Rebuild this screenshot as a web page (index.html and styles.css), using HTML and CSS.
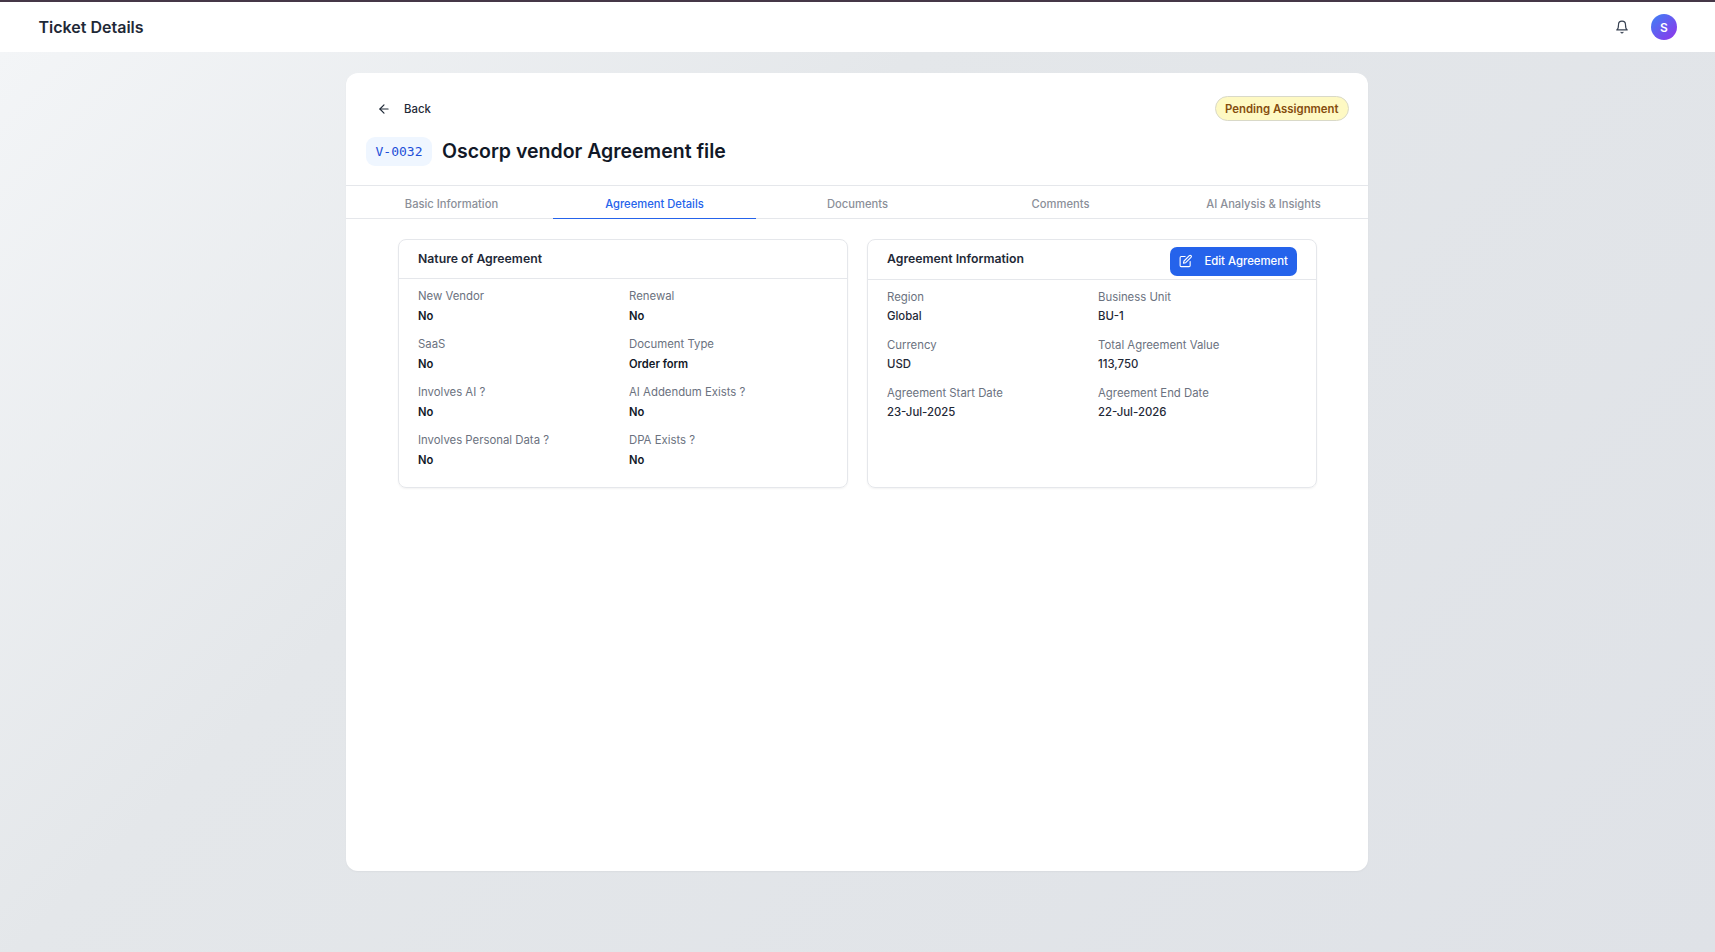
FILE: index.html
```html
<!DOCTYPE html>
<html lang="en">
<head>
    <meta charset="UTF-8" />
    <meta name="viewport" content="width=device-width, initial-scale=1.0" />
    <title>Ticket Details</title>
    <link rel="stylesheet" href="styles.css">
</head>
<body>
<header class="topbar">
    <h1 class="topbar-title">Ticket Details</h1>
    <div class="topbar-actions">
        <svg class="bell" width="14" height="14" viewBox="0 0 24 24" fill="none" stroke="currentColor" stroke-width="2" stroke-linecap="round" stroke-linejoin="round">
            <path d="M6 8a6 6 0 0 1 12 0c0 7 3 9 3 9H3s3-2 3-9" />
            <path d="M10.3 21a1.94 1.94 0 0 0 3.4 0" />
        </svg>
        <div class="avatar">S</div>
    </div>
</header>

<main class="page">
    <section class="card">
        <div class="card-head">
            <div class="back-row">
                <a class="back" href="#">
                    <svg width="14" height="14" viewBox="0 0 24 24" fill="none" stroke="currentColor" stroke-width="2" stroke-linecap="round" stroke-linejoin="round">
                        <path d="M19 12H5" />
                        <path d="M12 19l-7-7 7-7" />
                    </svg>
                    <span>Back</span>
                </a>
                <span class="status">Pending Assignment</span>
            </div>
            <div class="title-row">
                <span class="ticket-id">V-0032</span>
                <h2 class="ticket-title">Oscorp vendor Agreement file</h2>
            </div>
        </div>

        <nav class="tabs">
            <a class="tab" href="#">Basic Information</a>
            <a class="tab active" href="#">Agreement Details</a>
            <a class="tab" href="#">Documents</a>
            <a class="tab" href="#">Comments</a>
            <a class="tab" href="#">AI Analysis &amp; Insights</a>
        </nav>

        <div class="panels">
            <div class="panel">
                <div class="panel-head">
                    <h3 class="panel-title">Nature of Agreement</h3>
                </div>
                <dl class="fields">
                    <div class="field"><dt>New Vendor</dt><dd class="strong">No</dd></div>
                    <div class="field"><dt>Renewal</dt><dd class="strong">No</dd></div>
                    <div class="field"><dt>SaaS</dt><dd class="strong">No</dd></div>
                    <div class="field"><dt>Document Type</dt><dd class="strong">Order form</dd></div>
                    <div class="field"><dt>Involves AI ?</dt><dd class="strong">No</dd></div>
                    <div class="field"><dt>AI Addendum Exists ?</dt><dd class="strong">No</dd></div>
                    <div class="field"><dt>Involves Personal Data ?</dt><dd class="strong">No</dd></div>
                    <div class="field"><dt>DPA Exists ?</dt><dd class="strong">No</dd></div>
                </dl>
            </div>

            <div class="panel">
                <div class="panel-head with-button">
                    <h3 class="panel-title">Agreement Information</h3>
                    <button class="edit-btn" type="button">
                        <svg width="14" height="14" viewBox="0 0 24 24" fill="none" stroke="currentColor" stroke-width="2" stroke-linecap="round" stroke-linejoin="round">
                            <path d="M11 4H4a2 2 0 0 0-2 2v14a2 2 0 0 0 2 2h14a2 2 0 0 0 2-2v-7" />
                            <path d="M18.5 2.5a2.12 2.12 0 0 1 3 3L12 15l-4 1 1-4z" />
                        </svg>
                        <span>Edit Agreement</span>
                    </button>
                </div>
                <dl class="fields info">
                    <div class="field"><dt>Region</dt><dd>Global</dd></div>
                    <div class="field"><dt>Business Unit</dt><dd>BU-1</dd></div>
                    <div class="field"><dt>Currency</dt><dd>USD</dd></div>
                    <div class="field"><dt>Total Agreement Value</dt><dd>113,750</dd></div>
                    <div class="field"><dt>Agreement Start Date</dt><dd>23-Jul-2025</dd></div>
                    <div class="field"><dt>Agreement End Date</dt><dd>22-Jul-2026</dd></div>
                </dl>
            </div>
        </div>
    </section>
</main>
</body>
</html>
```

FILE: styles.css
```css
* {
    box-sizing: border-box;
}

html,
body {
    height: 100%;
}

body {
    margin: 0;
    display: flex;
    flex-direction: column;
    font-family: Inter, "Liberation Sans", sans-serif;
    color: #111827;
    overflow: hidden;
}

/* Top bar */
.topbar {
    height: 52px;
    flex: none;
    display: flex;
    align-items: center;
    justify-content: space-between;
    padding: 0 38px 0 38.5px;
    background: #fff;
    border-top: 2px solid #453747;
}

.topbar-title {
    margin: 0 0 1px;
    font-size: 16px;
    font-weight: 600;
    color: #1f2937;
}

.topbar-actions {
    display: flex;
    align-items: center;
    gap: 22px;
}

.bell {
    color: #374151;
}

.avatar {
    width: 26px;
    height: 26px;
    border-radius: 50%;
    display: flex;
    align-items: center;
    justify-content: center;
    font-size: 12px;
    font-weight: 600;
    color: #fff;
    background: linear-gradient(135deg, #3b82f6, #9333ea);
}

/* Page background and main card */
.page {
    flex: 1;
    padding: 21px 347px 81px 346px;
    background: linear-gradient(135deg, #f3f5f7 0%, #e4e7ea 35%, #dfe2e7 100%);
}

.card {
    height: 100%;
    background: #fff;
    border-radius: 12px;
    box-shadow: 0 1px 2px rgba(0, 0, 0, 0.04);
}

.card-head {
    height: 113px;
    padding: 23px 19px 0 20px;
    border-bottom: 1px solid #e5e7eb;
}

.back-row {
    display: flex;
    align-items: center;
    justify-content: space-between;
    height: 25px;
}

.back {
    display: flex;
    align-items: center;
    gap: 13px;
    padding-left: 11px;
    font-size: 11.375px;
    font-weight: 500;
    color: #1f2937;
    text-decoration: none;
}

.status {
    height: 25px;
    padding: 0 9.5px;
    display: flex;
    align-items: center;
    font-size: 11.375px;
    font-weight: 600;
    color: #854d0e;
    background: #fef9c3;
    border: 1px solid #d9d9c8;
    border-radius: 13px;
}

.title-row {
    display: flex;
    align-items: center;
    gap: 10px;
    margin-top: 16px;
}

.ticket-id {
    height: 29px;
    padding: 0 9.5px;
    display: flex;
    align-items: center;
    font-family: "DejaVu Sans Mono", monospace;
    font-size: 13px;
    color: #1d4ed8;
    background: #eff6ff;
    border-radius: 9px;
}

.ticket-title {
    margin: 0 0 1px;
    font-size: 19.5px;
    font-weight: 600;
    color: #111827;
}

/* Tabs */
.tabs {
    display: grid;
    grid-template-columns: repeat(5, 1fr);
    height: 33px;
    padding: 0 3px 0 4px;
    border-bottom: 1px solid #e5e7eb;
}

.tab {
    display: flex;
    align-items: center;
    justify-content: center;
    height: 33px;
    padding-top: 3px;
    font-size: 11.2px;
    font-weight: 500;
    color: #8b8f99;
    text-decoration: none;
}

.tab.active {
    color: #2563eb;
    border-bottom: 1px solid #2563eb;
}

/* Detail panels */
.panels {
    display: grid;
    grid-template-columns: 450px 450px;
    gap: 19px;
    padding: 20px 52px 0;
}

.panel {
    height: 249px;
    border: 1px solid #e5e7eb;
    border-radius: 8px;
    box-shadow: 0 1px 2px rgba(0, 0, 0, 0.05);
}

.panel-head {
    height: 39px;
    padding: 10px 19px 0;
    border-bottom: 1px solid #e5e7eb;
}

.panel-head.with-button {
    height: 40px;
    display: flex;
    justify-content: space-between;
    align-items: flex-start;
    padding-top: 7px;
}

.panel-title {
    margin: 0;
    font-size: 12.25px;
    line-height: 17px;
    font-weight: 600;
    color: #1f2937;
}

.with-button .panel-title {
    margin-top: 3px;
}

.edit-btn {
    width: 127px;
    height: 29px;
    padding: 0 9px 1px 9px;
    display: flex;
    align-items: center;
    gap: 12px;
    font-family: inherit;
    font-size: 11.375px;
    font-weight: 500;
    white-space: nowrap;
    color: #fff;
    background: #2563eb;
    border: none;
    border-radius: 7px;
    cursor: pointer;
}

.fields {
    display: grid;
    grid-template-columns: 1fr 1fr;
    row-gap: 8px;
    column-gap: 12px;
    margin: 0;
    padding: 9px 19px 0;
}

.field {
    height: 40px;
}

.field dt {
    font-size: 11.375px;
    line-height: 16px;
    color: #6b7280;
}

.field dd {
    margin: 2px 0 0;
    font-size: 11.375px;
    line-height: 18px;
    font-weight: 500;
    color: #1f2937;
}

.field dd.strong {
    margin-top: 3px;
    font-size: 11.2px;
    font-weight: 600;
    color: #111827;
}
```
